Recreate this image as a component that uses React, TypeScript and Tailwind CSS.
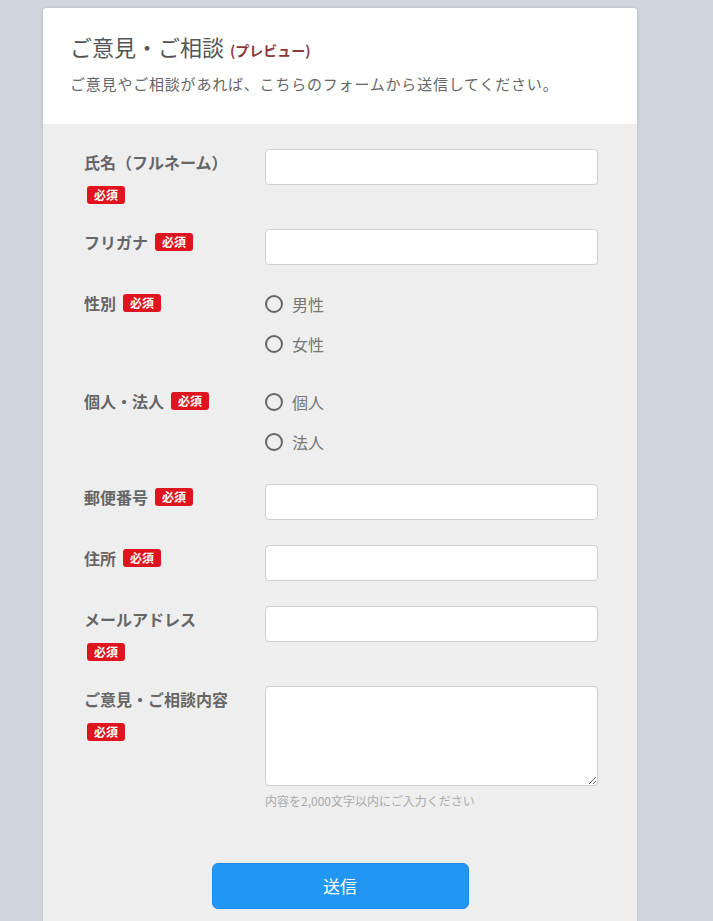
import React from 'react';

const font = { fontFamily: '"Noto Sans CJK JP", "Noto Sans", sans-serif' };

function Badge({ inline }: { inline?: boolean }) {
  return (
    <span
      className={`inline-block rounded-[3px] bg-[#e0141e] px-[7px] text-[12px] font-bold leading-[18px] text-white align-[2px] ${
        inline ? 'ml-[7px]' : 'ml-[3px]'
      }`}
    >
      必須
    </span>
  );
}

function Label({ text, wrap }: { text: string; wrap?: boolean }) {
  return (
    <div className="pr-[36px] text-[16px] font-bold leading-[26px] text-[#666]">
      {text}
      {wrap ? (
        <div className="mt-[11px] flex h-[18px] items-start">
          <Badge />
        </div>
      ) : (
        <Badge inline />
      )}
    </div>
  );
}

function TextInput() {
  return <input type="text" className="h-[36px] w-full rounded-[4px] border border-[#cfcfcf] bg-white px-2 text-[14px] outline-none" />;
}

function Radio({ label, name }: { label: string; name: string }) {
  return (
    <label className="flex h-[28px] items-center">
      <input type="radio" name={name} className="sr-only" />
      <span className="h-[18px] w-[18px] rounded-full border-2 border-[#666]" />
      <span className="ml-[9px] text-[16px] text-[#777]">{label}</span>
    </label>
  );
}

function Row({ label, wrap, children }: { label: string; wrap?: boolean; children: React.ReactNode }) {
  return (
    <div className="grid grid-cols-[181px_1fr]">
      <Label text={label} wrap={wrap} />
      <div>{children}</div>
    </div>
  );
}

export default function App() {
  return (
    <div className="min-h-[921px] bg-[#d0d4dc] pt-[8px]" style={font}>
      <div className="ml-[43px] w-[594px] overflow-hidden rounded-t-[4px] bg-[#eeeeee] shadow-[0_0_3px_rgba(0,0,0,0.15)]">
        <div className="bg-white px-[27px] pb-[29px] pt-[23px]">
          <h1 className="text-[22px] leading-[30px] text-[#555]">
            ご意見・ご相談
            <span className="ml-[6px] text-[14px] font-bold text-[#8b3a3a]">(プレビュー)</span>
          </h1>
          <p className="mt-[8px] text-[15px] leading-[22px] tracking-[0.8px] text-[#666]">
            ご意見やご相談があれば、こちらのフォームから送信してください。
          </p>
        </div>

        <form className="flex flex-col gap-[25px] pl-[41px] pr-[39px] pt-[25px]">
          <Row label="氏名（フルネーム）" wrap>
            <TextInput />
          </Row>
          <Row label="フリガナ">
            <TextInput />
          </Row>
          <Row label="性別">
            <div className="flex flex-col gap-[12px] pb-[5px]">
              <Radio name="gender" label="男性" />
              <Radio name="gender" label="女性" />
            </div>
          </Row>
          <Row label="個人・法人">
            <div className="flex flex-col gap-[12px] pb-[3px]">
              <Radio name="type" label="個人" />
              <Radio name="type" label="法人" />
            </div>
          </Row>
          <Row label="郵便番号">
            <TextInput />
          </Row>
          <Row label="住所">
            <TextInput />
          </Row>
          <Row label="メールアドレス" wrap>
            <TextInput />
          </Row>
          <Row label="ご意見・ご相談内容" wrap>
            <textarea className="block h-[100px] w-full rounded-[4px] border border-[#cfcfcf] bg-white p-2 text-[14px] outline-none" />
            <p className="mt-[7px] text-[12px] leading-[16px] text-[#aaa]">内容を2,000文字以内にご入力ください</p>
          </Row>
          <div className="flex justify-center pb-[20px] pr-[2px] pt-[29px]">
            <button
              type="button"
              className="h-[46px] w-[257px] rounded-[6px] border border-[#1e88e5] bg-[#2196f3] text-[17px] text-white"
            >
              送信
            </button>
          </div>
        </form>
      </div>
    </div>
  );
}
